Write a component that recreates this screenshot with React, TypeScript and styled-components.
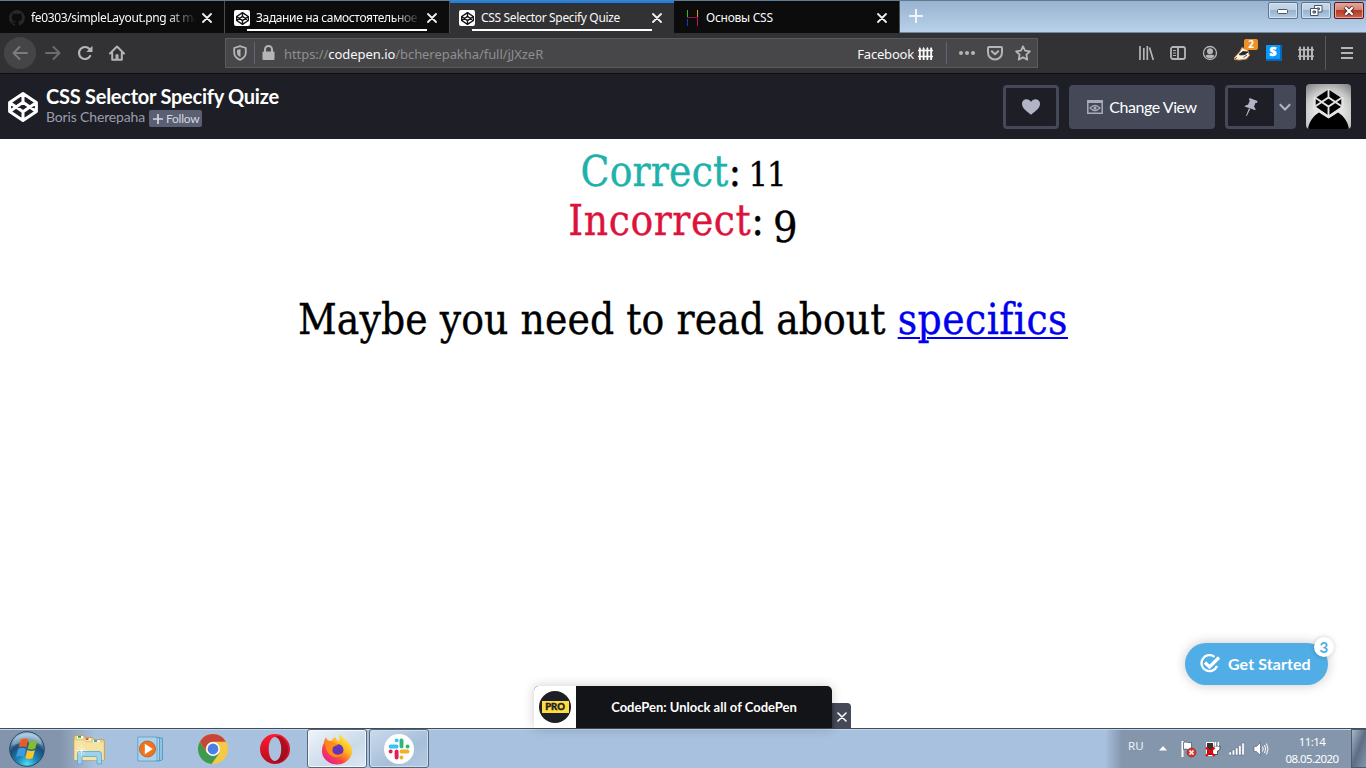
import React from "react";
import styled, { createGlobalStyle, css } from "styled-components";

const ui = `"Noto Sans", "Open Sans", sans-serif`;
const lato = `Lato, "Open Sans", sans-serif`;

const GlobalStyle = createGlobalStyle`
  * { box-sizing: border-box; }
  body { margin: 0; background: #fff; overflow: hidden; }
  svg { display: block; flex: none; }
`;

const Screen = styled.div`
  width: 1366px;
  height: 768px;
  display: flex;
  flex-direction: column;
  overflow: hidden;
  background: #fff;
  font-family: ${ui};
`;

/* ---------- tab strip ---------- */
const TabStrip = styled.div`
  height: 33px;
  display: flex;
  border-top: 1px solid #5f7b93;
  border-bottom: 1px solid #75879a;
  background: linear-gradient(#98b3d0, #b9d1ea);
`;

const Tab = styled.div<{ $active?: boolean; $last?: boolean }>`
  position: relative;
  width: ${(p) => (p.$active ? 224 : p.$last ? 226 : 225)}px;
  height: 32px;
  display: flex;
  align-items: center;
  gap: 6px;
  padding: 2px 12px 0 9px;
  color: #f9f9fa;
  background: ${(p) => (p.$active ? "#323234" : "#0c0c0d")};
  border-right: ${(p) => (p.$active ? "0" : "1px solid #4a4c50")};
  ${(p) => p.$active && css`box-shadow: inset 0 2px 0 #0a84ff;`}
`;

const TabUnderline = styled.span`
  position: absolute;
  left: 22px;
  top: 28px;
  width: 180px;
  height: 2px;
  background: #fff;
`;

const TabLabel = styled.span<{ $fade?: boolean; $track?: number }>`
  flex: 1;
  min-width: 0;
  overflow: hidden;
  white-space: nowrap;
  font-size: 12px;
  line-height: 18px;
  letter-spacing: ${(p) => p.$track || 0}px;
  ${(p) => p.$fade && css`mask-image: linear-gradient(to left, transparent 0, #000 28px);`}
`;

const NewTab = styled.div`
  flex: 1;
  padding: 8px 0 0 9px;
`;

const WindowControls = styled.div`
  display: flex;
  gap: 3px;
  padding: 1px 2px 0 0;
`;

const WindowButton = styled.div<{ $close?: boolean }>`
  width: 30px;
  height: 17px;
  display: flex;
  align-items: center;
  justify-content: center;
  border: 1px solid ${(p) => (p.$close ? "#5b1420" : "#60758e")};
  border-radius: 2px;
  box-shadow: inset 0 0 0 1px ${(p) => (p.$close ? "#e5a59b" : "#d3e2f1")};
  background: ${(p) =>
    p.$close
      ? "linear-gradient(#e2a79b 0, #d28475 45%, #b53a22 50%, #c9664d 100%)"
      : "linear-gradient(#c7d9ea 0, #bdd0e4 45%, #98b3ce 50%, #b4cde4 100%)"};
`;

/* ---------- navigation toolbar ---------- */
const Toolbar = styled.div`
  height: 41px;
  display: flex;
  align-items: center;
  background: #323234;
  border-bottom: 1px solid #0c0c0d;
  color: #b5b5b7;
`;

const NavButtons = styled.div`
  width: 225px;
  display: flex;
  align-items: center;
  gap: 16px;
  padding-left: 4px;
`;

const BackButton = styled.div`
  width: 32px;
  height: 32px;
  display: flex;
  align-items: center;
  justify-content: center;
  border-radius: 50%;
  background: #454547;
  color: #7b7b7d;
  margin-right: -7px;
`;

const AddressBar = styled.div`
  width: 813px;
  height: 30px;
  display: flex;
  align-items: center;
  padding-left: 7px;
  background: #474749;
  border: 1px solid #5b5b5d;
`;

const Divider = styled.span<{ $h: number; $l: number; $r: number; $color?: string }>`
  flex: none;
  width: 1px;
  height: ${(p) => p.$h}px;
  margin: 0 ${(p) => p.$r}px 0 ${(p) => p.$l}px;
  background: ${(p) => p.$color || "#5d6672"};
`;

const Url = styled.span`
  flex: 1;
  margin-left: 9px;
  font-size: 13px;
  line-height: 20px;
  letter-spacing: -0.06px;
  padding-top: 2px;
  color: #8e8e90;
  b { font-weight: 400; color: #f9f9fa; }
`;

const Container = styled.span`
  display: flex;
  align-items: center;
  gap: 4px;
  font-size: 13px;
  line-height: 20px;
  letter-spacing: -0.2px;
  color: #f9f9fa;
  span { padding-top: 2px; }
`;

const PageActions = styled.div`
  display: flex;
  align-items: center;
  gap: 12px;
  padding-right: 6px;
`;

const Extensions = styled.div`
  flex: 1;
  display: flex;
  align-items: center;
  justify-content: flex-end;
  gap: 16px;
`;

const Badger = styled.div`
  position: relative;
  width: 16px;
  height: 16px;
`;

const Badge = styled.span`
  position: absolute;
  left: 10px;
  top: -6px;
  width: 14px;
  height: 11px;
  border-radius: 2px;
  background: #ed9026;
  color: #fff;
  font: 700 10px/11px ${ui};
  text-align: center;
`;

const SBadge = styled.span`
  width: 16px;
  height: 16px;
  border-right: 2px solid #0868b8;
  border-bottom: 2px solid #0868b8;
  background: #0c98fb;
  color: #fff;
  font: 900 12px/14px "Noto Sans", sans-serif;
  -webkit-text-stroke: 0.6px #fff;
  text-align: center;
`;

const MenuButton = styled.div`
  padding-right: 13px;
`;

/* ---------- pen header ---------- */
const PenHeader = styled.header`
  height: 65px;
  display: flex;
  align-items: center;
  padding: 0 15px 0 8px;
  background: #1e1f26;
  font-family: ${lato};
`;

const PenInfo = styled.div`
  flex: 1;
  height: 65px;
  padding: 10px 0 0 8px;
`;

const PenTitle = styled.h1`
  margin: 0;
  font-size: 20px;
  line-height: 24px;
  font-weight: 700;
  letter-spacing: -0.25px;
  color: #fff;
`;

const AuthorRow = styled.div`
  display: flex;
  gap: 4px;
  font-size: 14px;
  line-height: 17px;
  color: #9b9dad;
`;

const Author = styled.span`
  width: 99px;
  letter-spacing: -0.15px;
  white-space: nowrap;
`;

const Follow = styled.span`
  width: 53px;
  height: 17px;
  margin-top: 2px;
  display: flex;
  align-items: center;
  gap: 3px;
  padding-left: 4px;
  border-radius: 2px;
  background: #5a5f73;
  color: #d5d7de;
  font-size: 12px;
  letter-spacing: -0.25px;
`;

const HeaderButtons = styled.div`
  display: flex;
  align-items: center;
  gap: 10px;
`;

const HeaderButton = styled.div<{ $w: number; $outline?: boolean }>`
  width: ${(p) => p.$w}px;
  height: 44px;
  display: flex;
  align-items: center;
  justify-content: center;
  gap: 6px;
  border: 3px solid #444857;
  border-radius: 4px;
  background: ${(p) => (p.$outline ? "#1e1f26" : "#444857")};
  color: #fff;
  font-size: 16px;
  letter-spacing: -0.45px;
  white-space: nowrap;
`;

const PinSplit = styled(HeaderButton)`
  gap: 0;
  justify-content: flex-start;
`;

const PinFace = styled.div`
  width: 46px;
  display: flex;
  justify-content: center;
`;

const PinMore = styled.div`
  flex: 1;
  height: 38px;
  display: flex;
  align-items: center;
  justify-content: center;
  padding-left: 2px;
  background: #444857;
`;

const Avatar = styled.div`
  width: 45px;
  height: 45px;
  margin-top: -1px;
  border-radius: 4px;
  overflow: hidden;
`;

/* ---------- quiz result ---------- */
const Result = styled.main`
  position: relative;
  flex: 1;
  padding-top: 8px;
  color: #000;
  font-family: "DejaVu Serif Condensed", "DejaVu Serif", serif;
  font-stretch: condensed;
  font-size: 42px;
  line-height: 49.3px;
`;

const ResultLine = styled.div`
  height: 49.3px;
  display: flex;
  justify-content: center;
  white-space: pre;
  -webkit-text-stroke: 0.35px currentColor;
`;

const Word = styled.span<{ $track: number; $color?: string; $size?: number; $drop?: number }>`
  letter-spacing: ${(p) => p.$track}px;
  color: ${(p) => p.$color || "inherit"};
  font-size: ${(p) => p.$size || 42}px;
  padding-top: ${(p) => p.$drop || 0}px;
`;

const SpecificsLink = styled.a`
  color: #0000ee;
  letter-spacing: 0.5px;
  font-variant-ligatures: none;
  text-decoration: underline;
  text-decoration-thickness: 2px;
  text-underline-offset: 3px;
`;

/* ---------- floating widgets ---------- */
const ProBanner = styled.aside`
  position: absolute;
  left: 534px;
  bottom: 0;
  display: flex;
  align-items: flex-end;
  font-family: ${lato};
  font-stretch: normal;
`;

const BannerBody = styled.div`
  width: 298px;
  height: 42px;
  display: flex;
  border-radius: 5px 5px 0 0;
  overflow: hidden;
  background: #131417;
  box-shadow: 0 0 12px rgba(0, 0, 0, 0.2);
`;

const BannerLogo = styled.div`
  width: 42px;
  height: 42px;
  display: flex;
  align-items: center;
  justify-content: center;
  background: #fff;
`;

const ProMark = styled.div`
  width: 32px;
  height: 32px;
  display: flex;
  align-items: center;
  border-radius: 50%;
  overflow: hidden;
  background: #1e1f26;
  span {
    width: 27px;
    height: 12px;
    margin: 0 2.5px;
    background: #ffdd40;
    color: #1e1f26;
    font: 900 9.5px/12px ${lato};
    text-align: center;
    -webkit-text-stroke: 0.4px #1e1f26;
  }
`;

const BannerText = styled.div`
  flex: 1;
  text-align: center;
  font-size: 13px;
  font-weight: 700;
  line-height: 42px;
  color: #fff;
`;

const BannerClose = styled.div`
  width: 19px;
  height: 25px;
  display: flex;
  align-items: center;
  justify-content: center;
  padding-top: 2px;
  border-radius: 0 4px 0 0;
  background: linear-gradient(to right, #343641, #444857 4px);
`;

const GetStarted = styled.div`
  position: absolute;
  right: 38px;
  bottom: 43px;
  width: 143px;
  height: 42px;
  display: flex;
  align-items: center;
  gap: 7px;
  padding-left: 15px;
  border-radius: 21px;
  background: #50ade5;
  color: #fff;
  font: 700 16px/20px ${lato};
  letter-spacing: 0.08px;
  box-shadow: 0 0 12px rgba(0, 0, 0, 0.22);
`;

const Counter = styled.span`
  position: absolute;
  right: -6px;
  top: -6px;
  width: 20px;
  height: 20px;
  border-radius: 50%;
  background: #fff;
  color: #50ade5;
  font: 700 15px/20px ${lato};
  text-align: center;
  box-shadow: 0 0 5px rgba(0, 0, 0, 0.2);
`;

/* ---------- taskbar ---------- */
const Taskbar = styled.footer`
  height: 40px;
  display: flex;
  border-top: 1px solid #3f4c5c;
  box-shadow: inset 0 1px 0 #c3d6ea;
  background: linear-gradient(to right, #8395ac 0, #8395ac 60px, #a7c1de 95px, #a7c1de 1105px, #8496ac 1122px);
`;

const Launchers = styled.div`
  flex: 1;
  display: flex;
  align-items: center;
  padding-left: 9px;
`;

const Launcher = styled.div<{ $w: number; $after?: number }>`
  width: ${(p) => p.$w}px;
  margin-right: ${(p) => p.$after || 0}px;
  display: flex;
  justify-content: center;
`;

const TaskButton = styled.div<{ $active?: boolean }>`
  width: 60px;
  height: 39px;
  margin-right: 2px;
  display: flex;
  align-items: center;
  justify-content: center;
  border: 1px solid #53667c;
  border-radius: 3px;
  box-shadow: inset 0 0 0 1px ${(p) => (p.$active ? "#f4f8fc" : "#cfdeee")};
  background: ${(p) =>
    p.$active
      ? "linear-gradient(to bottom right, #f0f4f9, #cbdaea 60%, #dce7f2)"
      : "linear-gradient(to bottom right, #cbdaeb, #a6bfda 60%, #b4cae1)"};
`;

const Tray = styled.div`
  display: flex;
  color: #fff;
  font-size: 11.5px;
`;

const Language = styled.span`
  width: 31px;
  padding-top: 9px;
  line-height: 16px;
  font-size: 11.5px;
  color: #eef2f6;
`;

const TrayIcons = styled.div`
  width: 126px;
  display: flex;
  align-items: center;
  gap: 8px;
`;

const ArrowUp = styled.span`
  margin-right: 4px;
`;

const Clock = styled.div`
  width: 54px;
  padding-top: 4px;
  line-height: 17px;
  letter-spacing: -0.6px;
  text-align: center;
  white-space: nowrap;
`;

const ShowDesktop = styled.div`
  width: 15px;
  height: 39px;
  margin-left: 12px;
  border: 1px solid #4c5b6e;
  border-right: 0;
  background: linear-gradient(to bottom right, #a9b8ca, #5d6e85 50%, #8496ad);
`;

/* ---------- drawings ---------- */
const Cross = ({ size = 10, w = 1.8, color = "#f0f0f1" }) => (
  <svg width={size} height={size} viewBox="0 0 10 10" stroke={color} strokeWidth={w} strokeLinecap="round">
    <path d="M1 1l8 8M9 1L1 9" />
  </svg>
);

const CodepenShape = ({ size, w, color }: { size: number; w: number; color: string }) => (
  <svg width={size} height={size} viewBox="0 0 30 30" fill="none" stroke={color} strokeWidth={w} strokeLinejoin="round">
    <path d="M15 1.6 28.4 10.4v9.2L15 28.4 1.6 19.6v-9.2zM15 1.6v8.6M15 28.4v-8.6M28.4 10.4 15 19.8 1.6 10.4M1.6 19.6 15 10.2l13.4 9.4" />
  </svg>
);

const Favicon = styled.span`
  width: 16px;
  height: 16px;
  display: flex;
  align-items: center;
  justify-content: center;
  border-radius: 2px;
  background: #fff;
`;

const GithubMark = () => (
  <svg width="16" height="16" viewBox="0 0 16 16" fill="#24292e">
    <path d="M8 0a8 8 0 0 0-2.5 15.6c.4.1.5-.2.5-.4v-1.5c-2 .4-2.6-.5-2.8-1-.1-.2-.5-.9-.8-1.1-.3-.2-.7-.5 0-.5.6 0 1.1.6 1.2.8.7 1.2 1.9.9 2.3.7.1-.5.3-.9.5-1.1-1.8-.2-3.6-.9-3.6-3.9 0-.9.3-1.6.8-2.2-.1-.2-.4-1 .1-2.1 0 0 .7-.2 2.2.8a7.5 7.5 0 0 1 4 0c1.5-1 2.2-.8 2.2-.8.4 1.1.2 1.9.1 2.1.5.6.8 1.3.8 2.2 0 3.100-1.900 3.700-3.700 3.900.3.300.6.700.6 1.500v2.200c0 .2.100.5.500.4A8 8 0 0 0 8 0z" />
  </svg>
);

const Fence = ({ size = 16, color = "#b5b5b7" }) => (
  <svg width={size} height={size} viewBox="0 0 16 16" fill={color}>
    <path d="M1 2.500 2 1l1 1.500V15H1zM5 2.500 6 1l1 1.500V15H5zM9 2.500 10 1l1 1.500V15H9zM13 2.500 14 1l1 1.500V15h-2zM0 4h16v1.500H0zM0 10.500h16V12H0z" />
  </svg>
);

const Heart = () => (
  <svg width="18" height="16" viewBox="0 0 18 16" fill="#b3b5c6">
    <path d="M9 15.800C5 12.700 0 9.300 0 4.800 0 2 2 .3 4.500.3 6.500.3 8 1.300 9 3 10 1.300 11.500.3 13.500.3 16 .3 18 2 18 4.800c0 4.500-5 7.900-9 11z" />
  </svg>
);

const AvatarArt = () => (
  <svg width="45" height="45" viewBox="0 0 45 45">
    <defs>
      <radialGradient id="halo" cx="50%" cy="65%" r="75%">
        <stop offset="0.400" stopColor="#e4e4e4" />
        <stop offset="0.700" stopColor="#c8c8c8" />
        <stop offset="1" stopColor="#8c8c8c" />
      </radialGradient>
    </defs>
    <rect width="45" height="45" fill="url(#halo)" />
    <path d="M2 45C3 38 7 32 13 28.500l9.500 6 9.500-6C38 32 42 38 43 45z" fill="#000" />
    <path d="M22.500 5.500 35.500 14v8.500l-13 9-13-9V14z" fill="#000" />
    <path d="M22.500 5v8.500M22.500 32v-8.500M36 13.500l-13.500 9-13.500-9M9 22.500l13.500-9 13.500 9" stroke="#e4e4e4" strokeWidth="1.900" fill="none" />
    <path d="M22.500 15.800 26.300 18l-3.800 2.400L18.700 18z" fill="#000" />
    <path d="M8.500 13v10.500l14 9.300 14-9.300V13" stroke="#e4e4e4" strokeWidth="2" fill="none" />
  </svg>
);

const StartOrb = () => (
  <svg width="36" height="36" viewBox="0 0 36 36">
    <defs>
      <radialGradient id="orb" cx="50%" cy="95%" r="85%">
        <stop offset="0" stopColor="#4fe0f8" />
        <stop offset="0.350" stopColor="#1c86b4" />
        <stop offset="0.700" stopColor="#1b4d78" />
        <stop offset="1" stopColor="#8db4cf" />
      </radialGradient>
    </defs>
    <circle cx="18" cy="18" r="17.300" fill="url(#orb)" stroke="#274864" strokeWidth="1" />
    <path d="M3 15C5 5 14 1.500 20 2.200 28 3 32 9 33 14c-8-4-20-4-30 1z" fill="#fff" opacity="0.280" />
    <path d="M12 8.500c2.600-1.500 5-1.300 7.300 0L17.500 16.500c-2.600-1.500-5-1.500-8 0z" fill="#ee5a24" />
    <path d="M20.500 9.500c2.700 1.300 5 1.300 8-.2L26.300 17.500c-2.700 1.300-5 1.300-7.600 0z" fill="#86bd2f" />
    <path d="M9 18c3-1.600 5.400-1.500 8 0L15 26c-2.600-1.500-5-1.400-8 0z" fill="#3f9be0" />
    <path d="M18.300 19c2.700 1.400 5 1.400 7.700 0l-2.200 8c-2.700 1.400-5 1.400-7.500 0z" fill="#fdc425" />
  </svg>
);

const ExplorerIcon = () => (
  <svg width="32" height="32" viewBox="0 0 32 32">
    <path d="M1 4.500Q1 2.500 2.500 2.500h8l1.500 2h7.500l1.500 2h8.500q2 0 2 2V27H1z" fill="#e9cf80" stroke="#c2a04c" strokeWidth=".8" />
    <path d="M4 3h6v2.500H4zM12 5.500h6v2h-6zM20 7.500h7v2h-7z" fill="#fff" />
    <path d="M5 3h3v1.700H5z" fill="#18a84a" /><path d="M12.500 5.200h3v1.700h-3z" fill="#d8432c" /><path d="M21 7.200h3v1.700h-3z" fill="#2d8fd8" />
    <path d="M1.500 7.500H11l1.500 2h18V27h-29z" fill="#f5e3a2" />
    <path d="M4.500 21q0-2.500 2.500-2.500h19q2.500 0 2.500 2.500v10H24v-6.500q0-1-1-1H10q-1 0-1 1V31H4.500z" fill="#9dd2ee" stroke="#5aa3cc" strokeWidth=".8" />
    <path d="M8.500 12v11M3 17.500h11M5 14l7 7M12 14l-7 7" stroke="#fff" strokeWidth=".7" opacity=".85" />
  </svg>
);

const PlayerIcon = () => (
  <svg width="28" height="28" viewBox="0 0 28 28">
    <path d="M10 3h15.500v21.500l-3 1.500-13-1z" fill="#8fc3e2" stroke="#4d90ba" strokeWidth=".8" />
    <path d="M5 2.500h17.500v23H5z" fill="#a9d3ec" stroke="#4d90ba" strokeWidth=".8" />
    <path d="M.8 2H20v24H.8z" fill="#a9d3ec" stroke="#5b9bc2" strokeWidth=".8" />
    <circle cx="10.500" cy="14" r="8" fill="#ef7422" stroke="#cc5410" strokeWidth=".8" />
    <path d="M7.800 8.800 15.800 14l-8 5.200z" fill="#fff" />
  </svg>
);

const ChromeIcon = () => (
  <svg width="30" height="30" viewBox="0 0 30 30">
    <circle cx="15" cy="15" r="15" fill="#f6c945" />
    <path d="M2 7.500A15 15 0 0 0 13.600 30l7.900-11.300L8.500 18.500z" fill="#3d9b50" />
    <path d="M2 7.500A15 15 0 0 1 28 7.700H15a7.500 7.500 0 0 0-6.500 11z" fill="#c8453a" />
    <circle cx="15" cy="15" r="6.900" fill="#fff" />
    <circle cx="15" cy="15" r="5.400" fill="#4a80e4" />
  </svg>
);

const OperaIcon = () => (
  <svg width="30" height="30" viewBox="0 0 30 30">
    <defs>
      <linearGradient id="opera" x1="0" y1="0" x2="0" y2="1">
        <stop offset="0" stopColor="#ff1b2d" />
        <stop offset="1" stopColor="#b80a1c" />
      </linearGradient>
    </defs>
    <path fillRule="evenodd" fill="url(#opera)" d="M15 0a15 15 0 1 0 0 30 15 15 0 0 0 0-30zm0 3c3.600 0 6.300 5 6.300 12S18.600 27 15 27 8.700 22 8.700 15 11.400 3 15 3z" />
    <path d="M15 3q3.500-2 7 .5c5 4 6 9 6 11.500s-1 8-6 11.500q-3.500 2.500-7 .5c3.600 0 6.300-5 6.300-12S18.600 3 15 3z" fill="#8e0c1c" opacity=".65" />
  </svg>
);

const FirefoxIcon = () => (
  <svg width="32" height="32" viewBox="0 0 32 32">
    <defs>
      <linearGradient id="fox" x1=".85" y1=".1" x2=".2" y2=".9">
        <stop offset="0" stopColor="#fff04a" />
        <stop offset=".4" stopColor="#ffb01e" />
        <stop offset=".7" stopColor="#ff4a3d" />
        <stop offset="1" stopColor="#e5208c" />
      </linearGradient>
    </defs>
    <path d="M3 10c0-2.500 1-4.500 2-6 .3 1.500 1 2.500 2.500 3.500l3 .5c1-2 2.500-3.500 4-4 0 2 1 3 4 4.500C18 5 18 2.500 20 .8c.5 3 3 4.700 5.500 7.200C29 10.500 31 14 31 18A15 13.500 0 0 1 1 18c0-3 .5-6 2-8z" fill="url(#fox)" />
    <circle cx="16.500" cy="17" r="6" fill="#6336b8" />
    <path d="M4 10c3-2.500 6-2.500 8.500-.5L17 11c0 2-4 1.500-5 3.500-1.500 3 0 7 4.500 7.300 3 .2 4-1.800 6-1.800-1.500 3.500-5 4.800-9 4C7 22.500 4.500 16 4 10z" fill="#ff8a1c" />
  </svg>
);

const SlackIcon = () => (
  <svg width="30" height="30" viewBox="0 0 30 30">
    <circle cx="15" cy="15" r="15" fill="#fff" />
    <g strokeWidth="3.900" strokeLinecap="round">
      <path d="M12.600 6.400h.1M6.600 12.500h6" stroke="#36c5f0" />
      <path d="M17.500 6.400v6M23.500 12.500h.1" stroke="#2eb67d" />
      <path d="M17.500 17.500h6M17.500 23.500v.1" stroke="#ecb22e" />
      <path d="M12.600 17.500v6M6.600 17.500h.1" stroke="#e01e5a" />
    </g>
  </svg>
);

export default function App() {
  return (
    <Screen>
      <GlobalStyle />

      <TabStrip>
        <Tab>
          <GithubMark />
          <TabLabel $fade $track={-0.36}>fe0303/simpleLayout.png at master</TabLabel>
          <Cross />
        </Tab>
        <Tab>
          <Favicon><CodepenShape size={13} w={3.2} color="#111" /></Favicon>
          <TabLabel $fade $track={-0.36}>Задание на самостоятельное изучение</TabLabel>
          <Cross />
          <TabUnderline />
        </Tab>
        <Tab $active>
          <Favicon><CodepenShape size={13} w={3.2} color="#111" /></Favicon>
          <TabLabel $track={-0.34}>CSS Selector Specify Quize</TabLabel>
          <Cross />
          <TabUnderline />
        </Tab>
        <Tab $last>
          <svg width="17" height="16" viewBox="0 0 17 16">
            <path d="M4.500 0v7" stroke="#35c400" /><path d="M14.500 0v7" stroke="#e89b1c" />
            <path d="M4.500 9v7" stroke="#1537cf" /><path d="M14.500 8v8" stroke="#c9085e" />
            <path d="M4 7.500h11" stroke="#8a1458" />
          </svg>
          <TabLabel $track={-0.25}>Основы CSS</TabLabel>
          <Cross />
        </Tab>
        <NewTab>
          <svg width="14" height="14" viewBox="0 0 14 14" stroke="#eef5fc" strokeWidth="2"><path d="M7 0v14M0 7h14" /></svg>
        </NewTab>
        <WindowControls>
          <WindowButton>
            <svg width="12" height="6" viewBox="0 0 12 6"><rect x=".5" y="1.500" width="10" height="4" rx="1" fill="#fff" stroke="#4b5566" /></svg>
          </WindowButton>
          <WindowButton>
            <svg width="13" height="11" viewBox="0 0 13 11" fill="#fff" stroke="#4b5566">
              <path d="M4.500.5h7.500v6.500H4.500zM7 3h2.500v1.500H7z" fillRule="evenodd" />
              <path d="M.5 3.500H8v7H.5zM3 6h2.500v2H3z" fillRule="evenodd" />
            </svg>
          </WindowButton>
          <WindowButton $close>
            <svg width="12" height="10" viewBox="0 0 12 10"><path d="M2 1l8 8M10 1L2 9" stroke="#542832" strokeWidth="4" /><path d="M2.300 1.300l7.400 7.400M9.700 1.300L2.300 8.700" stroke="#fff" strokeWidth="2.200" /></svg>
          </WindowButton>
        </WindowControls>
      </TabStrip>

      <Toolbar>
        <NavButtons>
          <BackButton>
            <svg width="16" height="16" viewBox="0 0 16 16" fill="none" stroke="currentColor" strokeWidth="2" strokeLinecap="round" strokeLinejoin="round"><path d="M15 8H1.500M7.500 2l-6 6 6 6" /></svg>
          </BackButton>
          <svg width="16" height="16" viewBox="0 0 16 16" fill="none" stroke="#6c6c6e" strokeWidth="2" strokeLinecap="round" strokeLinejoin="round"><path d="M1 8h13.500M8.500 2l6 6-6 6" /></svg>
          <svg width="16" height="16" viewBox="0 0 16 16" fill="none" stroke="currentColor" strokeWidth="2.200" strokeLinecap="round"><path d="M13.200 11A6 6 0 1 1 12.500 4" /><path d="M15.500.8v6.200H9.300z" fill="currentColor" stroke="none" /></svg>
          <svg width="16" height="16" viewBox="0 0 16 16" fill="none" stroke="currentColor" strokeWidth="2" strokeLinejoin="round" strokeLinecap="round"><path d="M1 8.500 8 1.500l7 7M3.200 8v6.800h9.600V8" /><path d="M7.200 14v-4h1.600v4" strokeWidth="1.500" /></svg>
        </NavButtons>
        <AddressBar>
          <svg width="14" height="16" viewBox="0 0 14 16" fill="none" stroke="currentColor" strokeWidth="1.800" strokeLinejoin="round"><path d="M7 1.200 12.800 3v4.500c0 3.500-2.500 6-5.800 7.300C3.700 13.500 1.200 11 1.200 7.500V3z" /><path d="M7.500 4 4 5v2.500C4 9.500 5 11 7.500 12z" fill="currentColor" stroke="none" /></svg>
          <Divider $h={22} $l={7} $r={7} />
          <svg width="13" height="16" viewBox="0 0 13 16" fill="none" stroke="currentColor" strokeWidth="2"><path d="M3 7V4.500a3.500 3.500 0 0 1 7 0V7" /><rect x=".5" y="6.500" width="12" height="8.500" rx="1" fill="currentColor" stroke="none" /></svg>
          <Url>https://<b>codepen.io</b>/bcherepakha/full/jJXzeR</Url>
          <Container><span>Facebook</span><Fence size={15} color="#f9f9fa" /></Container>
          <Divider $h={22} $l={13} $r={12} />
          <PageActions>
            <svg width="16" height="16" viewBox="0 0 16 16" fill="currentColor"><circle cx="2" cy="8" r="2" /><circle cx="8" cy="8" r="2" /><circle cx="14" cy="8" r="2" /></svg>
            <svg width="16" height="16" viewBox="0 0 16 16" fill="none" stroke="currentColor" strokeWidth="2" strokeLinecap="round" strokeLinejoin="round"><path d="M2 2h12q1 0 1 1v4.500a7 7 0 0 1-14 0V3q0-1 1-1zM4.800 6.300 8 9.300l3.200-3" /></svg>
            <svg width="16" height="16" viewBox="0 0 16 16" fill="none" stroke="currentColor" strokeWidth="1.800" strokeLinejoin="round"><path d="M8 1.300l2.100 4.400 4.800.6-3.500 3.400.9 4.900L8 12.200l-4.300 2.400.9-4.900L1.100 6.300l4.800-.6z" /></svg>
          </PageActions>
        </AddressBar>
        <Extensions>
          <svg width="16" height="16" viewBox="0 0 16 16" stroke="currentColor" strokeWidth="2" fill="none"><path d="M2 1v14M5.800 3v12M9.300 1v14M11.500 2.500 15.300 15" strokeWidth="1.700" /></svg>
          <svg width="16" height="16" viewBox="0 0 16 16" fill="none" stroke="currentColor" strokeWidth="1.800"><rect x="1" y="2" width="14" height="12" rx="2" /><path d="M8 2v12" /><path d="M3 5.500h3M3 8h3M3 10.500h3" strokeWidth="1" /></svg>
          <svg width="16" height="16" viewBox="0 0 16 16" fill="currentColor"><circle cx="8" cy="8" r="6.500" fill="none" stroke="currentColor" strokeWidth="1.300" /><circle cx="8" cy="6.300" r="3" /><path d="M3.500 11c1-1.500 2.500-1.200 4.500-1.200s3.500-.3 4.500 1.200c-1 1.500-2.500 2.300-4.500 2.300S4.500 12.500 3.500 11z" /></svg>
          <Badger>
            <svg width="16" height="16" viewBox="0 0 16 16"><path d="M.5 12.500 6 6.500 8 2.500l5.500 2.500 2 5.500-3 3.500-7 1-5-.5z" fill="#fbf3ea" stroke="#d98a4a" /><path d="M5 9.500 9 6.500l5 .5-3 2.500-4 .5zM9.500 12.500l3.500-2.500M1 13.500l2-1" stroke="#242424" fill="#242424" strokeWidth=".8" /></svg>
            <Badge>2</Badge>
          </Badger>
          <SBadge>S</SBadge>
          <Fence />
        </Extensions>
        <Divider $h={34} $l={11} $r={15} $color="#58585a" />
        <MenuButton>
          <svg width="12" height="14" viewBox="0 0 12 14" stroke="currentColor" strokeWidth="2"><path d="M0 2h12M0 7h12M0 12h12" /></svg>
        </MenuButton>
      </Toolbar>

      <PenHeader>
        <CodepenShape size={30} w={3} color="#fff" />
        <PenInfo>
          <PenTitle>CSS Selector Specify Quize</PenTitle>
          <AuthorRow>
            <Author>Boris Cherepaha</Author>
            <Follow>
              <svg width="10" height="10" viewBox="0 0 10 10" stroke="currentColor" strokeWidth="1.700"><path d="M5 0v10M0 5h10" /></svg>
              Follow
            </Follow>
          </AuthorRow>
        </PenInfo>
        <HeaderButtons>
          <HeaderButton $w={56} $outline><Heart /></HeaderButton>
          <HeaderButton $w={146}>
            <svg width="16" height="14" viewBox="0 0 16 14" fill="none" stroke="#a9abbb"><path d="M.8.8h14.400v12.400H.8z" strokeWidth="1.500" /><path d="M0 2h16" strokeWidth="2" /><path d="M3 8q5-5 10 0-5 5-10 0z" strokeWidth="1.200" /><circle cx="8" cy="8" r="1.600" fill="#a9abbb" stroke="none" /></svg>
            Change View
          </HeaderButton>
          <PinSplit $w={71} $outline>
            <PinFace>
              <svg width="14" height="18" viewBox="0 0 14 18" fill="#b3b5c6"><path d="M5.500 0 13.500 3 13 5l-1.500-.2-1.500 4q2 1.700 1.500 3.500L.5 8.500Q1.500 7 4 6.700L5.800 2.800 5 1.800zM4.800 10.500l1.500.6L2.800 18 2 17.700z" /></svg>
            </PinFace>
            <PinMore>
              <svg width="12" height="8" viewBox="0 0 12 8" fill="none" stroke="#b3b5c6" strokeWidth="2"><path d="M.8 1.200 6 6.500l5.200-5.300" /></svg>
            </PinMore>
          </PinSplit>
          <Avatar><AvatarArt /></Avatar>
        </HeaderButtons>
      </PenHeader>

      <Result>
        <ResultLine><Word $track={0.2} $color="#20b2aa">Correct</Word><Word $track={-2.3}>: </Word><Word $track={-1} $size={34} $drop={3}>11</Word></ResultLine>
        <ResultLine><Word $track={0.55} $color="#dc143c">Incorrect</Word><Word $track={-1.5}>: </Word><Word $track={0} $size={43} $drop={7}>9</Word></ResultLine>
        <ResultLine />
        <ResultLine><Word $track={0.1}>Maybe you need to read about </Word><SpecificsLink>specifics</SpecificsLink></ResultLine>

        <ProBanner>
          <BannerBody>
            <BannerLogo><ProMark><span>PRO</span></ProMark></BannerLogo>
            <BannerText>CodePen: Unlock all of CodePen</BannerText>
          </BannerBody>
          <BannerClose><Cross size={10} w={1.6} color="#fff" /></BannerClose>
        </ProBanner>

        <GetStarted>
          <svg width="21" height="20" viewBox="0 0 21 20" fill="none" stroke="#fff"><path d="M14.500 2.800A8 8 0 1 0 17 12" strokeWidth="2.300" /><path d="M5 8.500 9.500 13 19 3.500" strokeWidth="3.300" /></svg>
          Get Started
          <Counter>3</Counter>
        </GetStarted>
      </Result>

      <Taskbar>
        <Launchers>
          <Launcher $w={36}><StartOrb /></Launcher>
          <Launcher $w={88}><ExplorerIcon /></Launcher>
          <Launcher $w={36}><PlayerIcon /></Launcher>
          <Launcher $w={88}><ChromeIcon /></Launcher>
          <Launcher $w={36} $after={14}><OperaIcon /></Launcher>
          <TaskButton $active><FirefoxIcon /></TaskButton>
          <TaskButton><SlackIcon /></TaskButton>
        </Launchers>
        <Tray>
          <Language>RU</Language>
          <TrayIcons>
            <ArrowUp><svg width="8" height="5" viewBox="0 0 8 5"><path d="M4 0l4 4.500H0z" fill="#fff" /></svg></ArrowUp>
            <svg width="18" height="18" viewBox="0 0 18 18"><path d="M3.500 1v16" stroke="#fff" strokeWidth="2" /><path d="M4.500 2.500c3-1.500 4 1 8 0v7c-4 1-5-1.500-8 0z" fill="#fff" stroke="#444f5e" strokeWidth=".7" /><circle cx="12.500" cy="12.500" r="4.500" fill="#d83a30" stroke="#8d1a15" strokeWidth=".6" /><path d="M10.500 10.500l4 4M14.500 10.500l-4 4" stroke="#fff" strokeWidth="1.500" /></svg>
            <svg width="16" height="18" viewBox="0 0 16 18"><rect x="1.500" y="2.500" width="7" height="13" fill="#333" stroke="#fff" /><path d="M8.500 6H15v2.500q0 2.500-2.500 2.500v3.500H9" stroke="#333" strokeWidth=".8" fill="#fff" /><path d="M10.300 2v4M13.300 2v4" stroke="#fff" strokeWidth="1.500" /><path d="M1 7.500l8.500 8.500M9.500 7.500L1 16" stroke="#e80808" strokeWidth="2.400" /></svg>
            <svg width="16" height="14" viewBox="0 0 16 14" fill="#fff" stroke="#45546a" strokeWidth=".4"><path d="M0 10h2.500v3H0zM3.200 8h2.500v5H3.200zM6.400 6h2.500v7H6.400zM9.600 3.500h2.500V13H9.600zM12.800 1h2.500v12h-2.500z" /></svg>
            <svg width="16" height="16" viewBox="0 0 16 16" fill="none" stroke="#fff"><path d="M1 5.500h2.500L7.500 1.500v13l-4-4H1z" fill="#fff" stroke="#4b596b" strokeWidth=".6" /><path d="M9.500 5.500q1.500 2.500 0 5M11.500 4q2.300 4 0 8M13.500 2.500q3 5.500 0 11" /></svg>
          </TrayIcons>
          <Clock>11:14<br />08.05.2020</Clock>
          <ShowDesktop />
        </Tray>
      </Taskbar>
    </Screen>
  );
}
